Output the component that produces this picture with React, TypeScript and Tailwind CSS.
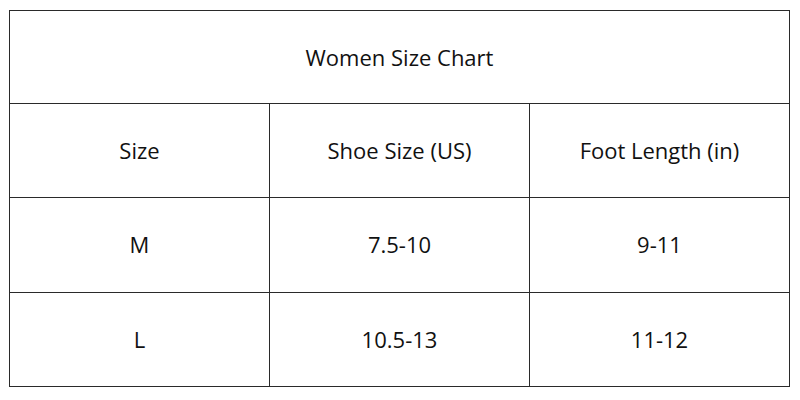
import React from 'react';

const rows = [
  ['Size', 'Shoe Size (US)', 'Foot Length (in)'],
  ['M', '7.5-10', '9-11'],
  ['L', '10.5-13', '11-12'],
];

const App: React.FC = () => {
  return (
    <div className="w-[800px] h-[400px] bg-white pt-[10px] pl-[9px]" style={{ fontFamily: '"Open Sans", sans-serif' }}>
      <div className="w-[781px] h-[377px] border-[1.5px] border-[#2a2a2a] flex flex-col text-[22px] text-[#111]">
        <div className="h-[93px] flex items-center justify-center border-b-[1.5px] border-[#2a2a2a]">
          Women Size Chart
        </div>
        {rows.map((row, i) => (
          <div
            key={i}
            className={
              'grid grid-cols-[260px_260px_1fr] flex-1' +
              (i < rows.length - 1 ? ' border-b-[1.5px] border-[#2a2a2a]' : '')
            }
          >
            {row.map((cell, j) => (
              <div
                key={j}
                className={
                  'flex items-center justify-center' +
                  (j < row.length - 1 ? ' border-r-[1.5px] border-[#2a2a2a]' : '')
                }
              >
                {cell}
              </div>
            ))}
          </div>
        ))}
      </div>
    </div>
  );
};

export default App;
